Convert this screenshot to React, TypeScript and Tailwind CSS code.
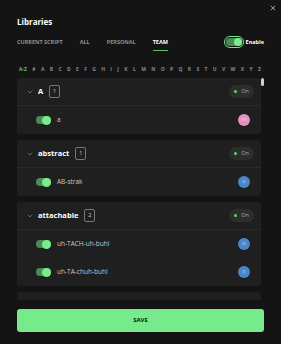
import { X, ChevronDown } from 'lucide-react';

const LETTERS = ['#', 'A', 'B', 'C', 'D', 'E', 'F', 'G', 'H', 'I', 'J', 'K', 'L', 'M', 'N', 'O', 'P', 'Q', 'R', 'S', 'T', 'U', 'V', 'W', 'X', 'Y', 'Z'];

const TABS = [
  { label: 'CURRENT SCRIPT', active: false },
  { label: 'ALL', active: false },
  { label: 'PERSONAL', active: false },
  { label: 'TEAM', active: true },
];

type Entry = { name: string; initials: string; color: string };

const GROUPS: { title: string; items: Entry[] }[] = [
  { title: 'A', items: [{ name: 'a', initials: 'TH', color: 'bg-[#e58fc4]' }] },
  { title: 'abstract', items: [{ name: 'AB-strak', initials: 'JE', color: 'bg-[#4a86c8]' }] },
  {
    title: 'attachable',
    items: [
      { name: 'uh-TACH-uh-buhl', initials: 'JE', color: 'bg-[#4a86c8]' },
      { name: 'uh-TA-chuh-buhl', initials: 'JE', color: 'bg-[#4a86c8]' },
    ],
  },
];

function MiniToggle() {
  return (
    <div className="w-[15px] h-[8px] rounded-full bg-[#4a8c56] relative shrink-0">
      <div className="absolute right-0 top-[-0.5px] w-[9px] h-[9px] rounded-full bg-[#7aec8e]" />
    </div>
  );
}

function GroupCard({ title, items }: { title: string; items: Entry[] }) {
  return (
    <div className="rounded-[3px] bg-[#1f1f1f] shrink-0">
      {/* header */}
      <div className="h-[28px] flex items-center pl-[9px] pr-[7px] border-b border-[#2a2a2a]">
        <ChevronDown size={8} strokeWidth={2} className="text-[#8a8a8a]" />
        <span className="ml-[4px] text-[7.5px] font-bold text-white">{title}</span>
        <span className="ml-[6px] w-[11px] h-[13px] border border-[#777] rounded-[2px] flex items-center justify-center text-[5.5px] text-[#ccc]">
          {items.length}
        </span>
        <div className="ml-auto h-[13px] px-[5px] rounded-full bg-[#2d2d2d] flex items-center gap-[4px]">
          <span className="w-[3px] h-[3px] rounded-full bg-[#4fe06a]" />
          <span className="text-[5.5px] text-[#aaa]">On</span>
        </div>
      </div>
      {/* rows */}
      {items.map((it) => (
        <div key={it.name} className="h-[28px] flex items-center pl-[19px] pr-[11px]">
          <MiniToggle />
          <span className="ml-[6px] text-[6.5px] text-[#c8c8c8]">{it.name}</span>
          <span
            className={`ml-auto w-[12px] h-[12px] rounded-full ${it.color} flex items-center justify-center text-[4px] text-white/70`}
          >
            {it.initials}
          </span>
        </div>
      ))}
    </div>
  );
}

export default function App() {
  return (
    <div
      className="w-[281px] h-[344px] bg-[#141414] relative flex flex-col overflow-hidden"
      style={{ fontFamily: '"Open Sans", Lato, sans-serif' }}
    >
      <X size={8} strokeWidth={2} className="absolute right-[4px] top-[4px] text-[#ddd]" />

      {/* ── Title ── */}
      <div className="px-[17px] pt-[16px] text-[8px] font-bold text-white leading-[12px]">Libraries</div>

      {/* ── Tabs ── */}
      <div className="mt-[7px] px-[17px] flex items-center h-[14px]">
        <div className="flex items-center gap-[17px] h-full">
          {TABS.map((t) => (
            <div key={t.label} className="relative h-full flex items-center">
              <span className={`text-[5.5px] font-bold ${t.active ? 'text-white' : 'text-[#8f8f8f]'}`}>
                {t.label}
              </span>
              {t.active && <div className="absolute bottom-[-2px] left-0 right-0 h-[1.5px] bg-[#4ec964]" />}
            </div>
          ))}
        </div>
        <div className="ml-auto flex items-center gap-[2px]">
          <div className="w-[20px] h-[12px] rounded-full border border-[#7ae68c] p-[1px]">
            <div className="w-full h-full rounded-full bg-[#4a8c56] relative">
              <div className="absolute right-0 top-0 w-[8px] h-[8px] rounded-full bg-[#7aec8e]" />
            </div>
          </div>
          <span className="text-[5.5px] font-bold text-white">Enable</span>
        </div>
      </div>

      {/* ── Alphabet ── */}
      <div className="mt-[17px] pl-[19px] pr-[20px] flex items-center justify-between h-[8px]">
        <span className="text-[5px] font-bold text-[#4ec964]">A-Z</span>
        {LETTERS.map((l) => (
          <span key={l} className="text-[5px] font-bold text-[#8a8a8a]">{l}</span>
        ))}
      </div>

      {/* ── List ── */}
      <div className="relative mt-[4px] h-[222px] overflow-hidden pl-[17px] pr-[20px] flex flex-col gap-[6px]">
        {GROUPS.map((g) => (
          <GroupCard key={g.title} title={g.title} items={g.items} />
        ))}
        <div className="rounded-[3px] bg-[#1f1f1f] h-[40px] shrink-0" />
        <div className="absolute right-[17px] top-0 w-[3px] h-[8px] rounded-full bg-[#cfcfcf]" />
      </div>

      {/* ── Save ── */}
      <div className="px-[17px] pt-[4px]">
        <button className="w-full h-[23px] rounded-[3px] bg-[#77ea8c] text-[6px] font-bold text-[#1a1a1a]">
          SAVE
        </button>
      </div>
    </div>
  );
}
